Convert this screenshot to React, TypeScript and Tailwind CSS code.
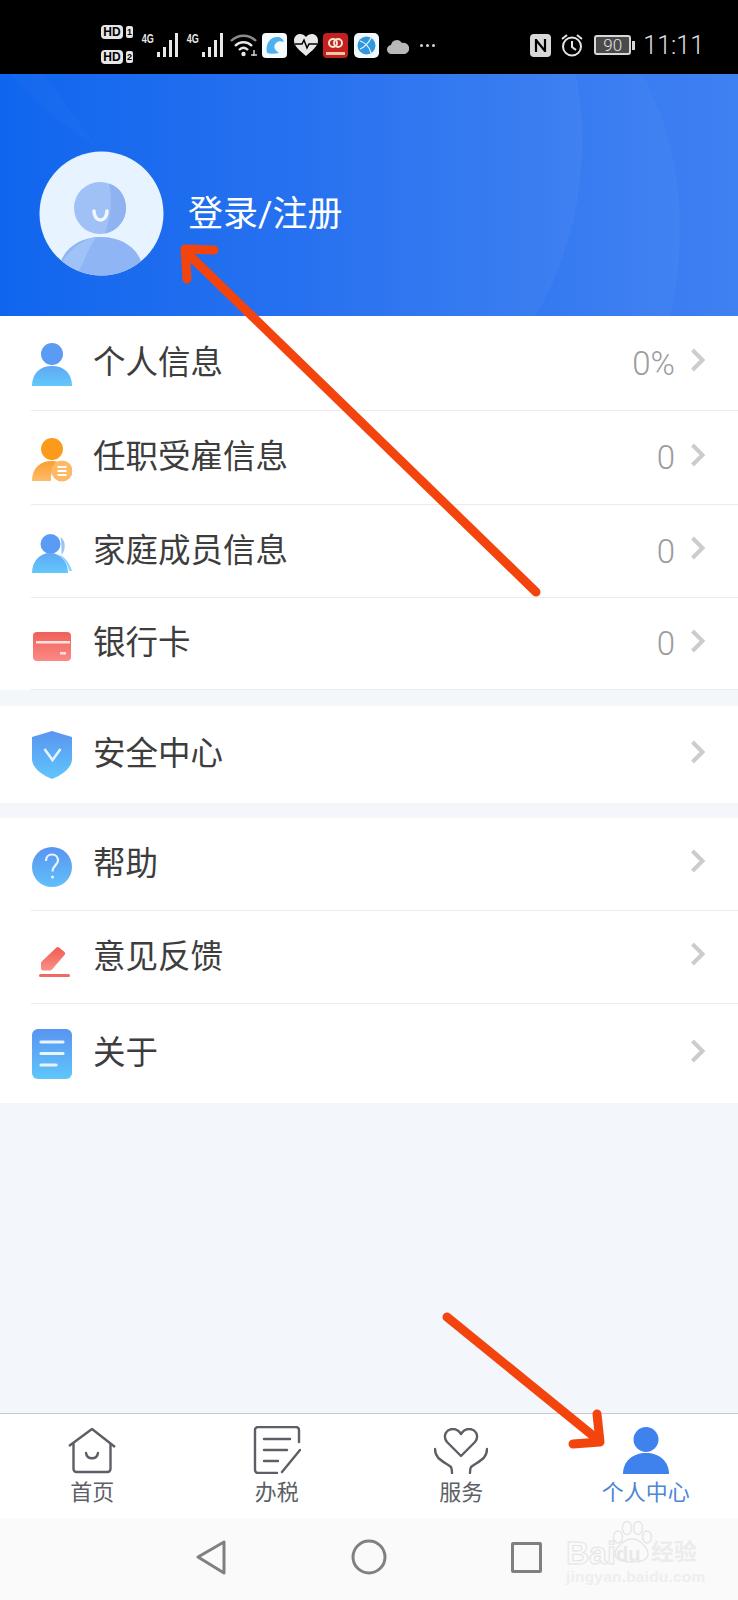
import React from 'react';

const cjk = 'font-["Roboto","Noto_Sans_CJK_SC",sans-serif]';

const Gradient: React.FC<{ id: string; from: string; to: string }> = ({ id, from, to }) => (
  <defs>
    <linearGradient id={id} x1="0" y1="0" x2="0" y2="1">
      <stop offset="0" stopColor={from} />
      <stop offset="1" stopColor={to} />
    </linearGradient>
  </defs>
);

// list row icons, all centred on a 40x48 box
const PersonIcon = () => (
  <svg width="40" height="48" viewBox="0 0 40 48">
    <Gradient id="person" from="#5fa8f5" to="#62c8fb" />
    <circle cx="20" cy="15" r="11" fill="#5a9cf3" />
    <path d="M0 47c0-13 8-20 20-20s20 7 20 20z" fill="url(#person)" />
  </svg>
);

const WorkIcon = () => (
  <svg width="40" height="48" viewBox="0 0 40 48">
    <Gradient id="work" from="#fb9f2e" to="#fdbb6c" />
    <circle cx="20" cy="15" r="11" fill="#fc9a1c" />
    <path d="M0 47c0-13 8-20 20-20 4 0 7 1 9 2-6 2-11 9-10 18z" fill="url(#work)" />
    <circle cx="30" cy="37" r="10.500" fill="#fdb965" />
    <path d="M25.500 33h9M25.500 37h9M25.500 41h9" stroke="#fff" strokeWidth="2.200" />
  </svg>
);

const FamilyIcon = () => (
  <svg width="40" height="48" viewBox="0 0 40 48">
    <Gradient id="family" from="#5fa8f5" to="#62c8fb" />
    <circle cx="18.500" cy="17" r="10" fill="#5a9cf3" />
    <path d="M0 46c0-12 8-20 18-20s18 8 18 20z" fill="url(#family)" />
    <path d="M28.500 10c5 3 6 12 1 18 0-6 0-12-1-18z" fill="#9cc4f7" />
    <path d="M26 27c7 3 12 9 14 17h-3c-1-6-5-12-11-17z" fill="#8fd4fa" />
  </svg>
);

const CardIcon = () => (
  <svg width="40" height="48" viewBox="0 0 40 48">
    <Gradient id="card" from="#f0605a" to="#fb8a86" />
    <rect x="1" y="12" width="38" height="29" rx="4" fill="url(#card)" />
    <rect x="4" y="21" width="34" height="2.500" fill="#ffe3e0" />
    <rect x="28" y="32" width="6" height="2.500" fill="#ffe3e0" />
  </svg>
);

const ShieldIcon = () => (
  <svg width="40" height="48" viewBox="0 0 40 48">
    <Gradient id="shield" from="#5a94f1" to="#5fc6fb" />
    <path d="M20 0l20 6v22c0 9-10 16-20 20C10 44 0 37 0 28V6z" fill="url(#shield)" />
    <path d="M12.500 18l8 11 8-11" fill="none" stroke="#e4f3fe" strokeWidth="2.600" />
  </svg>
);

const HelpIcon = () => (
  <svg width="40" height="48" viewBox="0 0 40 48">
    <Gradient id="help" from="#5a94f1" to="#5fc0fa" />
    <circle cx="20" cy="27" r="20" fill="url(#help)" />
    <path d="M14 21c0-4 2.500-6.500 6-6.500s6 2.500 6 6c0 4.500-5.500 5-5.500 11" fill="none" stroke="#e9f5fe" strokeWidth="2.200" />
    <circle cx="20.500" cy="37" r="1.500" fill="#e9f5fe" />
  </svg>
);

const PenIcon = () => (
  <svg width="40" height="48" viewBox="0 0 40 48">
    <Gradient id="pen" from="#f15b50" to="#fb9088" />
    <path d="M24.500 14.500a2 2 0 0 1 2.500 0l5.500 4.500a2 2 0 0 1 .2 2.700L20 36.500a3 3 0 0 1-2 1H11a2 2 0 0 1-2-2v-5a3 3 0 0 1 .7-2z" fill="url(#pen)" />
    <rect x="7" y="41" width="31" height="3" rx="1.500" fill="#ee6a63" />
  </svg>
);

const DocIcon = () => (
  <svg width="40" height="50" viewBox="0 0 40 50">
    <Gradient id="doc" from="#5a94f1" to="#5fc6fb" />
    <rect x="0" y="0" width="40" height="50" rx="6" fill="url(#doc)" />
    <path d="M9 13h22M9 24.500h22M9 36h15" stroke="#e9f5fe" strokeWidth="3.200" strokeLinecap="round" />
  </svg>
);

const Chevron = () => (
  <svg width="16" height="24" viewBox="0 0 16 24" className="mb-[6px]">
    <path d="M2.500 2l10 10-10 10" fill="none" stroke="#cccccc" strokeWidth="4" />
  </svg>
);

type RowData = { icon: React.ReactNode; label: string; value?: string; height: string; line?: boolean };

const groupOne: RowData[] = [
  { icon: <PersonIcon />, label: '个人信息', value: '0%', height: 'h-[95px]', line: true },
  { icon: <WorkIcon />, label: '任职受雇信息', value: '0', height: 'h-[94px]', line: true },
  { icon: <FamilyIcon />, label: '家庭成员信息', value: '0', height: 'h-[93px]', line: true },
  { icon: <CardIcon />, label: '银行卡', value: '0', height: 'h-[92px]', line: true },
];

const groupThree: RowData[] = [
  { icon: <HelpIcon />, label: '帮助', height: 'h-[93px]', line: true },
  { icon: <PenIcon />, label: '意见反馈', height: 'h-[93px]', line: true },
  { icon: <DocIcon />, label: '关于', height: 'h-[99px]' },
];

const Row: React.FC<RowData> = ({ icon, label, value, height, line }) => (
  <div className={`${height} pl-[31px] bg-white`}>
    <div className={`h-full flex items-center pr-[32px] ${line ? 'border-b border-[#e9ebee]' : ''}`}>
      <div className="w-[41px] flex justify-center shrink-0">{icon}</div>
      <span className={`ml-[21px] text-[32.500px] leading-none text-[#3d3d3d] ${cjk}`}>{label}</span>
      <div className="ml-auto flex items-center">
        {value && <span className="mr-[15px] text-[33px] leading-none text-[#9c9c9c] font-['Roboto',sans-serif] font-light">{value}</span>}
        <Chevron />
      </div>
    </div>
  </div>
);

const HdBadge: React.FC<{ n: string }> = ({ n }) => (
  <div className="flex items-center gap-[3px]">
    <span className="w-[22px] h-[14px] rounded-[4px] bg-[#e6e6e6] text-black text-[12px] leading-[14px] font-bold text-center font-['Liberation_Sans',sans-serif]">HD</span>
    <span className="w-[7px] h-[12px] rounded-[2px] bg-[#e6e6e6] text-black text-[9px] leading-[12px] font-bold text-center font-['Liberation_Sans',sans-serif]">{n}</span>
  </div>
);

const Signal = () => (
  <div className="flex items-start">
    <span className="text-[12px] leading-[12px] text-[#e8e8e8] font-bold scale-x-75 w-[14px] -ml-[1px] font-['Liberation_Sans',sans-serif]">4G</span>
    <svg width="23" height="24" viewBox="0 0 23 24" className="ml-[1px]">
      <path d="M2 19h3v5H2zM8 14h3v10H8zM14 7h3v17h-3zM20 0h3v24h-3z" fill="#e8e8e8" />
    </svg>
  </div>
);

const Wifi = () => (
  <svg width="27" height="24" viewBox="0 0 27 24" fill="none">
    <path d="M1 8c7-7 18-7 25 0" stroke="#8c8c8c" strokeWidth="2.400" />
    <path d="M5 13c5-5 12-5 17 0" stroke="#e8e8e8" strokeWidth="2.400" />
    <path d="M9 17c3-3 6-3 9 0" stroke="#e8e8e8" strokeWidth="2.400" />
    <circle cx="13.500" cy="21" r="2.200" fill="#e8e8e8" />
    <path d="M21 22h6M24 17v6" stroke="#d0d0d0" strokeWidth="1.500" />
  </svg>
);

const StatusBar = () => (
  <div className="h-[74px] shrink-0 bg-black flex items-center pl-[101px] pr-[34px] pt-[16px]">
    <div className="flex flex-col gap-[11px] w-[32px] shrink-0 -mt-[1px]">
      <HdBadge n="1" />
      <HdBadge n="2" />
    </div>
    <div className="ml-[8px]"><Signal /></div>
    <div className="ml-[8px]"><Signal /></div>
    <div className="ml-[7px]"><Wifi /></div>
    {/* notification icons */}
    <svg width="25" height="25" viewBox="0 0 25 25" className="ml-[5px]">
      <rect width="25" height="25" rx="4" fill="#f5fbff" />
      <path d="M5 20C3 11 8 4 15 4c4 0 6 2 7 5-3-1-6-1-8 1-3 3-2 7 3 10-4 1-9 1-12 0z" fill="#4fb0f0" />
    </svg>
    <svg width="24" height="22" viewBox="0 0 24 22" className="ml-[7px]">
      <path d="M12 22C5 16 0 12 0 6.500 0 2.500 3 0 6 0c2.500 0 4.500 1 6 3 1.500-2 3.500-3 6-3 3 0 6 2.500 6 6.500C24 12 19 16 12 22z" fill="#e8e8e8" />
      <path d="M1 10h7l2-4 3 8 2-4h8" fill="none" stroke="#000" strokeWidth="1.500" />
    </svg>
    <svg width="25" height="25" viewBox="0 0 25 25" className="ml-[5px]">
      <rect width="25" height="25" rx="4" fill="#c4201f" />
      <circle cx="10" cy="10" r="4" fill="none" stroke="#f5e5d0" strokeWidth="2" />
      <circle cx="15" cy="10" r="4" fill="none" stroke="#f5e5d0" strokeWidth="2" />
      <rect x="3" y="19" width="19" height="3" fill="#eac9a8" />
    </svg>
    <svg width="25" height="25" viewBox="0 0 25 25" className="ml-[6px]">
      <rect width="25" height="25" rx="5" fill="#f2f8fc" />
      <circle cx="12.500" cy="12.500" r="9" fill="#2f97dd" />
      <path d="M6 8c4 1 9 5 11 12M17 5c-2 4-6 9-11 11" fill="none" stroke="#e8f5fd" strokeWidth="1.200" />
    </svg>
    <svg width="22" height="15" viewBox="0 0 22 15" className="ml-[8px] mt-[2px]">
      <path d="M5 15a4.500 4.500 0 0 1-1-9 6 6 0 0 1 11-2 5.500 5.500 0 0 1 3 11z" fill="#b8b8b8" />
    </svg>
    <span className="ml-[11px] flex gap-[3px] shrink-0">
      <i className="w-[3px] h-[3px] rounded-full bg-[#d8d8d8]" />
      <i className="w-[3px] h-[3px] rounded-full bg-[#d8d8d8]" />
      <i className="w-[3px] h-[3px] rounded-full bg-[#d8d8d8]" />
    </span>
    <div className="ml-auto flex items-center">
      <svg width="23" height="23" viewBox="0 0 23 23">
        <rect x="1" width="21" height="23" rx="4" fill="#d8d8d8" />
        <path d="M7 5v13M16 5v13M7 6l9 11" fill="none" stroke="#000" strokeWidth="2.200" />
      </svg>
      <svg width="24" height="24" viewBox="0 0 24 24" fill="none" stroke="#e4e4e4" strokeWidth="2" className="ml-[8px]">
        <circle cx="12" cy="13.500" r="9" />
        <path d="M12 8v6l4 3M2 6l5-4M22 6l-5-4" />
      </svg>
      <div className="ml-[10px] w-[37px] h-[20px] rounded-[3px] border-[2px] border-[#d8d8d8] bg-[#4a4a4a] text-[#e4e4e4] text-[17px] leading-[16px] text-center font-['Roboto',sans-serif] font-light">90</div>
      <i className="ml-[1px] w-[3px] h-[9px] bg-[#d8d8d8]" />
      <span className="ml-[8px] text-[25px] leading-none text-[#e0e0e0] font-['Roboto',sans-serif] font-light">11:11</span>
    </div>
  </div>
);

const Avatar = () => (
  <svg width="125" height="125" viewBox="0 0 125 125" className="shrink-0">
    <defs>
      <clipPath id="avatarClip">
        <circle cx="62.500" cy="62.500" r="62" />
      </clipPath>
    </defs>
    <circle cx="62.500" cy="62.500" r="62" fill="#e7f3fe" />
    <g clipPath="url(#avatarClip)">
      <circle cx="61" cy="57" r="26" fill="#9fc1f6" />
      <path d="M70 32.500c12 4 17 14 17 25s-8 22-21 25c5-14 8-32 4-50z" fill="#8fb3f0" />
      <path d="M21 125c-4-20 14-39 41-39s45 19 41 39z" fill="#8fb5f4" />
      <path d="M21 115c8-16 22-26 36-29-8 12-12 26-20 39z" fill="#9fc3f7" />
    </g>
    <path d="M55 60c0 12 13 12 13 0" fill="none" stroke="#f2f8ff" strokeWidth="3.500" strokeLinecap="round" />
  </svg>
);

const Header = () => (
  <div className="relative h-[242px] shrink-0 overflow-hidden bg-gradient-to-r from-[#0f66ee] to-[#3f80f2] flex items-center pl-[39px] pt-[36px]">
    {/* soft arcs behind the profile */}
    <svg className="absolute inset-0" width="738" height="242" viewBox="0 0 738 242">
      <defs>
        <linearGradient id="arcOne" x1="300" y1="0" x2="590" y2="0" gradientUnits="userSpaceOnUse">
          <stop offset="0" stopColor="#fff" stopOpacity="0" />
          <stop offset="1" stopColor="#fff" stopOpacity="0.04" />
        </linearGradient>
        <linearGradient id="arcTwo" x1="540" y1="0" x2="680" y2="0" gradientUnits="userSpaceOnUse">
          <stop offset="0" stopColor="#fff" stopOpacity="0" />
          <stop offset="1" stopColor="#fff" stopOpacity="0.03" />
        </linearGradient>
      </defs>
      <path d="M12 0h32l52 72C60 50 30 25 12 0z" fill="#fff" fillOpacity="0.02" />
      <path d="M300 0h276c16 90 0 170-40 242H300z" fill="url(#arcOne)" />
      <path d="M540 0h102c44 80 44 170 28 242H540z" fill="url(#arcTwo)" />
    </svg>
    <div className="relative flex items-center gap-[24px]">
      <Avatar />
      <span className={`mt-[2px] text-[35px] leading-none text-white ${cjk}`}>登录/注册</span>
    </div>
  </div>
);

const HomeTab = () => (
  <svg width="48" height="46" viewBox="0 0 48 46" fill="none" stroke="#5c5f65" strokeWidth="2.400" strokeLinejoin="round">
    <path d="M1 18L24 1l23 18" />
    <path d="M5.500 15v26a3 3 0 0 0 3 3h31a3 3 0 0 0 3-3V15" />
    <path d="M18 25c1 7 11 7 12 0" strokeLinecap="round" />
  </svg>
);

const TaxTab = () => (
  <svg width="48" height="48" viewBox="0 0 48 48" fill="none" stroke="#5c5f65" strokeWidth="2.400" strokeLinecap="round">
    <path d="M46 16V4a3 3 0 0 0-3-3H5a3 3 0 0 0-3 3v40a3 3 0 0 0 3 3h19" />
    <path d="M11 13h26M11 24h23M11 35h14" />
    <path d="M29 46l18-22" />
  </svg>
);

const ServiceTab = () => (
  <svg width="54" height="46" viewBox="0 0 54 46" fill="none" stroke="#5c5f65" strokeWidth="2.400" strokeLinecap="round" strokeLinejoin="round">
    <path d="M27 28L13 14C8 7 13 1 19 1c3.500 0 6 2 8 5 2-3 4.500-5 8-5 6 0 11 6 6 13z" />
    <path d="M1 21c0 10 8 12 16 18 1 2 1 4 1 6" />
    <path d="M53 21c0 10-8 12-16 18-1 2-1 4-1 6" />
  </svg>
);

const MeTab = () => (
  <svg width="46" height="47" viewBox="0 0 46 47">
    <circle cx="23" cy="12.500" r="12.500" fill="#3f82ee" />
    <path d="M0 47c0-13 10-21 23-21s23 8 23 21z" fill="#3f82ee" />
  </svg>
);

const tabs = [
  { icon: <HomeTab />, label: '首页', color: 'text-[#5c5f65]' },
  { icon: <TaxTab />, label: '办税', color: 'text-[#5c5f65]' },
  { icon: <ServiceTab />, label: '服务', color: 'text-[#5c5f65]' },
  { icon: <MeTab />, label: '个人中心', color: 'text-[#4c86d6]' },
];

const TabBar = () => (
  <div className="h-[105px] shrink-0 bg-white border-t border-[#c9cacd] grid grid-cols-4">
    {tabs.map((t) => (
      <div key={t.label} className="flex flex-col items-center pt-[12px]">
        <div className="h-[48px] flex items-end">{t.icon}</div>
        <span className={`mt-[6px] text-[22px] leading-[26px] ${t.color} ${cjk}`}>{t.label}</span>
      </div>
    ))}
  </div>
);

const NavBar = () => (
  <div className="relative h-[82px] shrink-0 bg-[#fafafa]">
    <div className="h-full flex items-center pb-[4px] pl-[196px]">
      <svg width="30" height="35" viewBox="0 0 30 35" fill="none" stroke="#808080" strokeWidth="3" strokeLinejoin="round">
        <path d="M28 2v31L2 17z" />
      </svg>
      <svg width="36" height="36" viewBox="0 0 36 36" fill="none" stroke="#808080" strokeWidth="3" className="ml-[125px]">
        <circle cx="18" cy="18" r="16" />
      </svg>
      <div className="ml-[124px] w-[31px] h-[31px] rounded-[2px] border-[3px] border-[#808080]" />
    </div>
    {/* site stamp in the corner */}
    <div className="absolute left-[566px] top-[2px] w-[135px] h-[72px] font-['Liberation_Sans',sans-serif]">
      <svg className="absolute left-[44px] top-0" width="44" height="44" viewBox="0 0 44 44" fill="none" stroke="#e6e6e6" strokeWidth="1.400">
        <ellipse cx="8" cy="17" rx="4.500" ry="6" />
        <ellipse cx="17" cy="8" rx="4.500" ry="6.500" />
        <ellipse cx="28" cy="8" rx="4.500" ry="6.500" />
        <ellipse cx="37" cy="17" rx="4.500" ry="6" />
        <path d="M22 19c8 0 16 9 16 15 0 6-8 8-16 8S5 40 5 34c0-6 9-15 17-15z" />
      </svg>
      <span className="absolute left-0 top-[18px] text-[32px] leading-[30px] font-bold text-transparent [-webkit-text-stroke:1px_#e4e4e4]">Bai</span>
      <span className="absolute left-[50px] top-[24px] text-[20px] leading-[20px] font-bold text-[#e8e8e8]">du</span>
      <span className={`absolute left-[85px] top-[20px] text-[23px] leading-[26px] font-bold text-[#ececec] ${cjk}`}>经验</span>
      <span className="absolute left-0 top-[48px] text-[15.500px] leading-[18px] tracking-[0.2px] font-bold text-[#eeeeee] whitespace-nowrap">jingyan.baidu.com</span>
    </div>
  </div>
);

// hand-drawn arrows laid over the page
const Arrows = () => (
  <svg className="absolute left-0 top-0 pointer-events-none" width="738" height="1600" viewBox="0 0 738 1600" fill="none" stroke="#f4440e" strokeLinecap="round" strokeLinejoin="round">
    <path d="M536 592L186 252" strokeWidth="9" />
    <path d="M214 250l-29-1 2 30" strokeWidth="9" />
    <path d="M447 1317l150 122" strokeWidth="9" />
    <path d="M597 1414l3 28-27 2" strokeWidth="9" />
  </svg>
);

const App: React.FC = () => {
  return (
    <div className="relative w-[738px] h-[1600px] flex flex-col bg-[#f3f6fb] overflow-hidden">
      <StatusBar />
      <Header />
      <div>
        {groupOne.map((r) => <Row key={r.label} {...r} />)}
      </div>
      <div className="mt-[16px]">
        <Row icon={<ShieldIcon />} label="安全中心" height="h-[97px]" />
      </div>
      <div className="mt-[15px]">
        {groupThree.map((r) => <Row key={r.label} {...r} />)}
      </div>
      <div className="flex-1" />
      <TabBar />
      <NavBar />
      <Arrows />
    </div>
  );
};

export default App;
